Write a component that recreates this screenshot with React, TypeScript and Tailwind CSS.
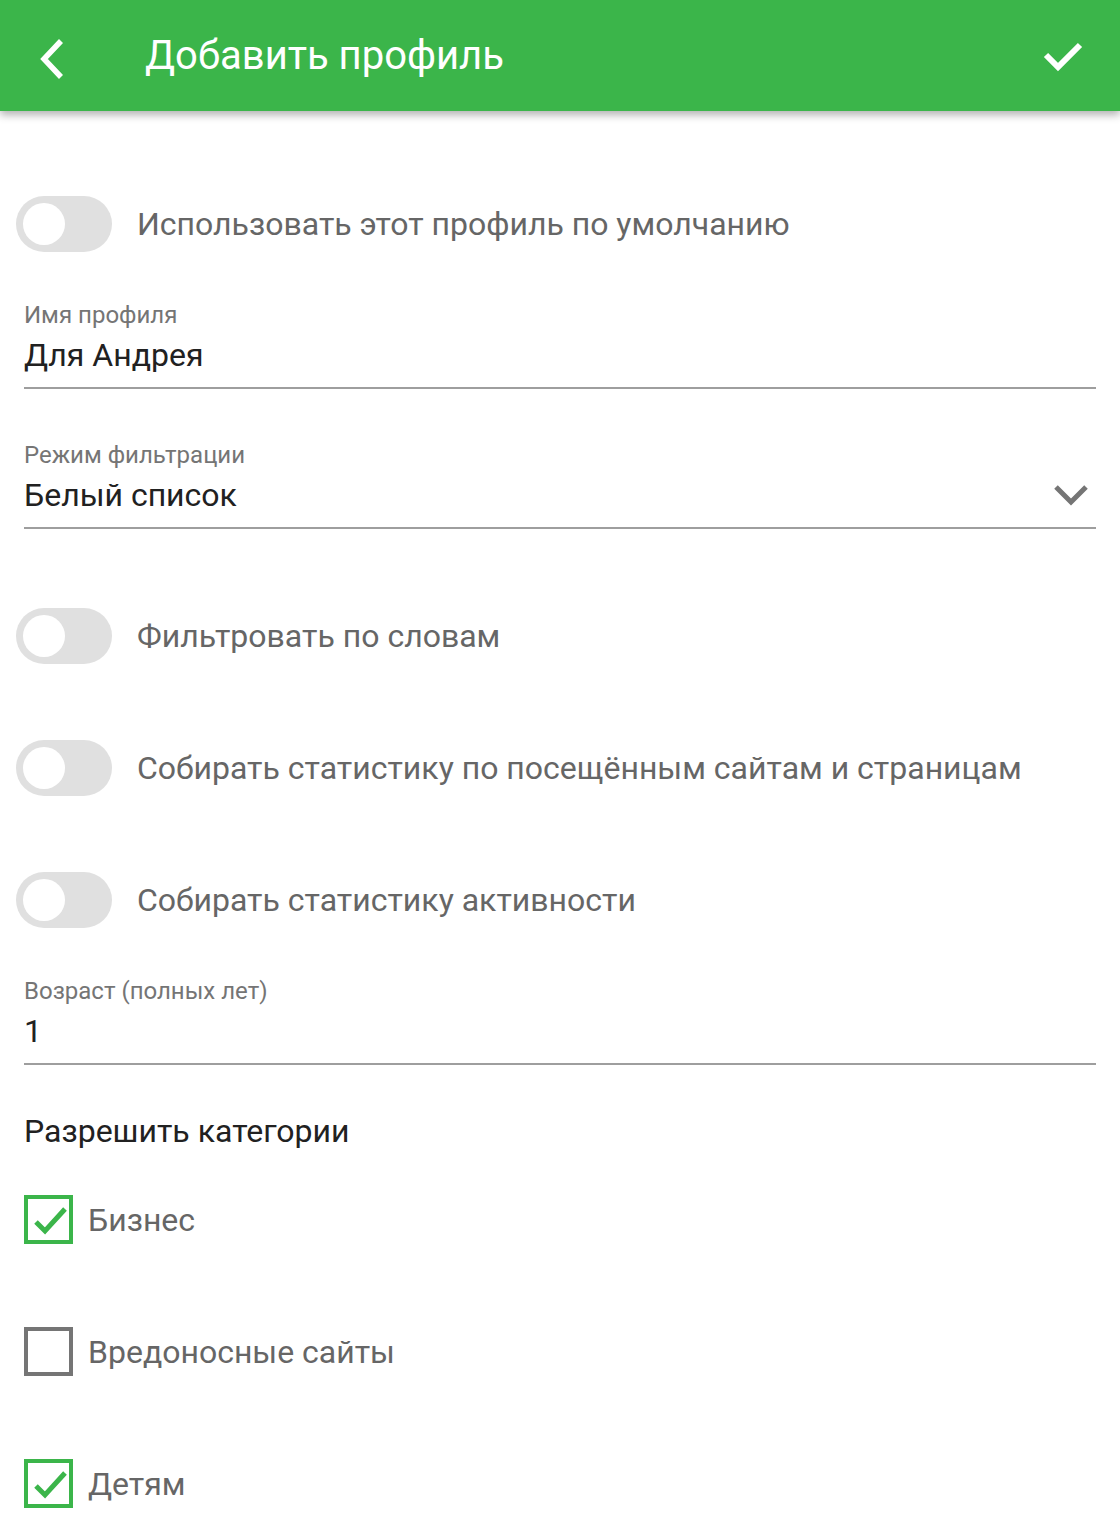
import React from "react";

const font = { fontFamily: "Roboto, 'Noto Sans', sans-serif" };

function Toggle({ label, className }: { label: string; className?: string }) {
  return (
    <div className={"flex items-center h-[56px] " + (className || "")}>
      <div className="relative w-[96px] h-[56px] rounded-full bg-[#e0e0e0] ml-[16px] shrink-0">
        <div className="absolute left-[7px] top-[7px] w-[42px] h-[42px] rounded-full bg-white" />
      </div>
      <div className="ml-[25px] text-[32px] leading-[40px] text-[#666666] whitespace-nowrap">{label}</div>
    </div>
  );
}

function Field({
  label,
  value,
  className,
  chevron,
}: {
  label: string;
  value: string;
  className?: string;
  chevron?: boolean;
}) {
  return (
    <div className={"mx-[24px] border-b-2 border-[#9e9e9e] pb-[12px] " + (className || "")}>
      <div className="text-[24px] leading-[28px] text-[#757575]">{label}</div>
      <div className="mt-[6px] flex items-center justify-between h-[40px]">
        <div className="text-[32px] leading-[40px] text-[#212121]">{value}</div>
        {chevron && (
          <svg width="40" height="30" viewBox="0 0 40 30" className="mr-[4px]">
            <polyline points="3,3 18,18 33,3" fill="none" stroke="#757575" strokeWidth="5" transform="translate(1,4)" />
          </svg>
        )}
      </div>
    </div>
  );
}

function Check({ label, checked, className }: { label: string; checked: boolean; className?: string }) {
  return (
    <div className={"flex items-center ml-[24px] " + (className || "")}>
      <div
        className={
          "relative w-[49px] h-[49px] border-[4px] shrink-0 " +
          (checked ? "border-[#3bb54a]" : "border-[#757575]")
        }
      >
        {checked && (
          <svg width="41" height="41" viewBox="0 0 41 41" className="absolute left-0 top-0">
            <polyline points="8,23 17,32 37,10" fill="none" stroke="#3bb54a" strokeWidth="5" />
          </svg>
        )}
      </div>
      <div className="ml-[15px] text-[32px] leading-[40px] text-[#666666]">{label}</div>
    </div>
  );
}

export default function App() {
  return (
    <div className="w-[1120px] h-[1540px] bg-white overflow-hidden" style={font}>
      <div className="relative z-10 h-[111px] bg-[#3bb54a] flex items-center shadow-[0_4px_8px_rgba(0,0,0,0.3)]">
        <svg width="40" height="50" viewBox="0 0 40 50" className="ml-[32px]">
          <polyline points="29,6 12,24 29,42" fill="none" stroke="white" strokeWidth="5.5" transform="translate(0,4)" />
        </svg>
        <div className="ml-[73px] text-[40px] leading-[50px] text-white">Добавить профиль</div>
        <div className="flex-1" />
        <svg width="44" height="36" viewBox="0 0 44 36" className="mr-[34px] mt-[4px]">
          <polyline points="4,15 16,27 38,5" fill="none" stroke="white" strokeWidth="6" />
        </svg>
      </div>

      <Toggle label="Использовать этот профиль по умолчанию" className="mt-[85px]" />
      <Field label="Имя профиля" value="Для Андрея" className="mt-[49px]" />
      <Field label="Режим фильтрации" value="Белый список" className="mt-[52px]" chevron />
      <Toggle label="Фильтровать по словам" className="mt-[79px]" />
      <Toggle label="Собирать статистику по посещённым сайтам и страницам" className="mt-[76px]" />
      <Toggle label="Собирать статистику активности" className="mt-[76px]" />
      <Field label="Возраст (полных лет)" value="1" className="mt-[49px]" />
      <div className="ml-[24px] mt-[46px] text-[32px] leading-[40px] text-[#212121]">Разрешить категории</div>
      <Check label="Бизнес" checked className="mt-[44px]" />
      <Check label="Вредоносные сайты" checked={false} className="mt-[83px]" />
      <Check label="Детям" checked className="mt-[83px]" />
    </div>
  );
}
